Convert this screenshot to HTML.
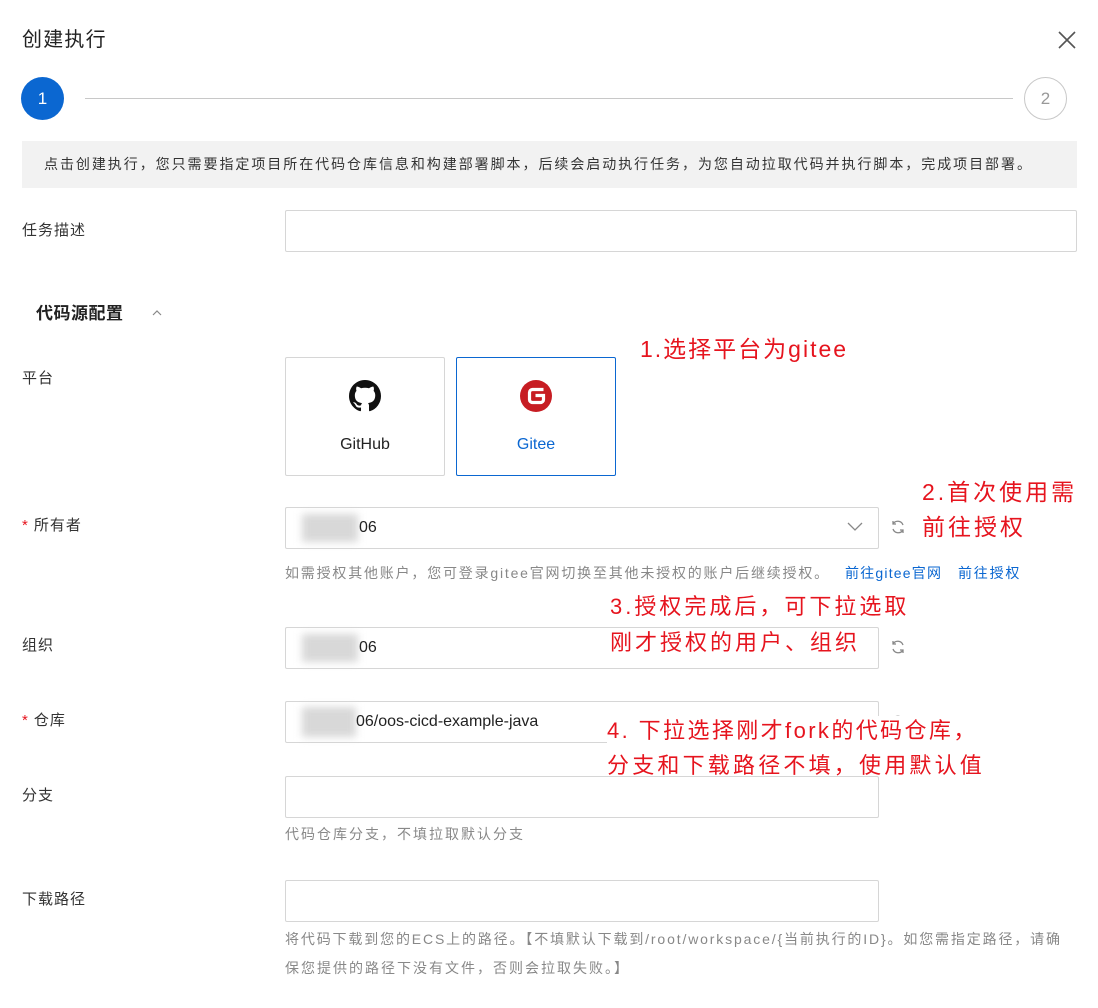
<!DOCTYPE html>
<html><head><meta charset="utf-8">
<style>
*{margin:0;padding:0;box-sizing:border-box}
body{width:1098px;height:1008px;background:#fff;position:relative;overflow:hidden;font-family:"Liberation Sans","Noto Sans CJK SC",sans-serif;color:#333;font-size:14px}
.a{position:absolute;white-space:nowrap}
.lbl{font-size:15px;color:#333;line-height:20px;letter-spacing:1px}
.inp{position:absolute;border:1px solid #d6d6d6;border-radius:2px;background:#fff}
.help{font-size:14px;color:#888;line-height:20px;letter-spacing:1.8px}
.red{color:#e6141e;font-size:22px;line-height:30px;background:#fff;letter-spacing:3px}
.blur{position:absolute;background:#d8d8d8;filter:blur(4px)}
.star{color:#e6141e;margin-right:5px}
</style></head><body>
<div class="a" style="left:22px;top:27px;font-size:20px;line-height:26px;color:#222;letter-spacing:1.2px">创建执行</div>
<svg class="a" style="left:1058px;top:31px" width="18" height="18" viewBox="0 0 18 18"><path d="M1 1L17 17M17 1L1 17" stroke="#555" stroke-width="1.6"/></svg>

<div class="a" style="left:21px;top:77px;width:43px;height:43px;border-radius:50%;background:#0b67d1;color:#fff;font-size:17px;line-height:43px;text-align:center">1</div>
<div class="a" style="left:85px;top:98px;width:928px;height:1px;background:#c8c8c8"></div>
<div class="a" style="left:1024px;top:77px;width:43px;height:43px;border-radius:50%;border:1px solid #c8c8c8;color:#999;font-size:17px;line-height:41px;text-align:center">2</div>

<div class="a" style="left:22px;top:141px;width:1055px;height:47px;background:#f2f2f2"></div>
<div class="a" style="left:44px;top:154px;font-size:14px;line-height:20px;color:#333;letter-spacing:1.95px">点击创建执行，您只需要指定项目所在代码仓库信息和构建部署脚本，后续会启动执行任务，为您自动拉取代码并执行脚本，完成项目部署。</div>

<div class="a lbl" style="left:22px;top:221px">任务描述</div>
<div class="inp" style="left:285px;top:210px;width:792px;height:42px"></div>

<div class="a" style="left:36px;top:303px;font-size:17px;font-weight:bold;line-height:22px;color:#222;letter-spacing:0.5px">代码源配置</div>
<svg class="a" style="left:152px;top:310px" width="10" height="6" viewBox="0 0 10 6"><path d="M1 5L5 1L9 5" stroke="#888" fill="none" stroke-width="1.2"/></svg>

<div class="a red" style="left:640px;top:334px;font-size:23px;letter-spacing:2px">1.选择平台为gitee</div>

<div class="a lbl" style="left:22px;top:369px">平台</div>
<div class="a" style="left:285px;top:357px;width:160px;height:119px;border:1px solid #d6d6d6;border-radius:2px"></div>
<svg class="a" style="left:349px;top:380px" width="32" height="32" viewBox="0 0 16 16"><path fill="#111" d="M8 0C3.58 0 0 3.58 0 8c0 3.54 2.290 6.53 5.47 7.59.4.07.55-.17.55-.38 0-.19-.01-.82-.01-1.49-2.01.37-2.53-.49-2.690-.94-.09-.23-.48-.94-.82-1.13-.28-.15-.68-.52-.01-.53.63-.01 1.08.58 1.23.82.72 1.21 1.87.87 2.33.66.07-.52.28-.87.51-1.07-1.78-.2-3.64-.89-3.64-3.95 0-.87.31-1.59.82-2.15-.08-.2-.36-1.02.08-2.12 0 0 .67-.21 2.2.82.64-.18 1.32-.27 2-.27.68 0 1.36.09 2 .27 1.53-1.04 2.2-.82 2.2-.82.44 1.1.16 1.92.08 2.12.51.56.82 1.27.82 2.15 0 3.07-1.87 3.75-3.65 3.95.29.25.54.73.54 1.48 0 1.07-.01 1.93-.01 2.2 0 .21.15.46.55.38A8.013 8.013 0 0016 8c0-4.42-3.58-8-8-8z"/></svg>
<div class="a" style="left:285px;top:435px;width:160px;text-align:center;font-size:16px;line-height:20px;color:#222">GitHub</div>

<div class="a" style="left:456px;top:357px;width:160px;height:119px;border:1px solid #0b67d1;border-radius:2px"></div>
<svg class="a" style="left:519px;top:379px" width="34" height="34" viewBox="0 0 34 34"><circle cx="17" cy="17" r="16" fill="#c71d23"/><path d="M24.5 10.5H13.5a3 3 0 0 0-3 3v7a3 3 0 0 0 3 3h8a3 3 0 0 0 3-3V16.5h-8" stroke="#fff" stroke-width="3.2" fill="none"/></svg>
<div class="a" style="left:456px;top:435px;width:160px;text-align:center;font-size:16px;line-height:20px;color:#0b67d1">Gitee</div>

<div class="a red" style="left:922px;top:477px;font-size:23px">2.首次使用需</div>
<div class="a red" style="left:922px;top:512px;font-size:23px">前往授权</div>

<div class="a lbl" style="left:22px;top:516px"><span class="star">*</span>所有者</div>
<div class="inp" style="left:285px;top:507px;width:594px;height:42px"></div>
<div class="blur" style="left:302px;top:514px;width:56px;height:28px"></div>
<div class="a" style="left:359px;top:517px;font-size:16px;line-height:22px;color:#222">06</div>
<svg class="a" style="left:847px;top:522px" width="16" height="10" viewBox="0 0 16 10"><path d="M1 1L8 8L15 1" stroke="#888" fill="none" stroke-width="1.3"/></svg>
<svg class="a" style="left:890px;top:519px" width="16" height="16" viewBox="0 0 16 16"><path d="M13 6A5.5 5.5 0 0 0 3 5M3 10a5.5 5.5 0 0 0 10 1M3 2v3h3M13 14v-3h-3" stroke="#888" fill="none" stroke-width="1.3"/></svg>
<div class="a help" style="left:285px;top:563px">如需授权其他账户，您可登录gitee官网切换至其他未授权的账户后继续授权。</div>
<div class="a" style="left:845px;top:563px;font-size:14px;line-height:20px;color:#0b67d1;letter-spacing:1.2px">前往gitee官网</div>
<div class="a" style="left:958px;top:563px;font-size:14px;line-height:20px;color:#0b67d1;letter-spacing:1.8px">前往授权</div>

<div class="a lbl" style="left:22px;top:636px">组织</div>
<div class="inp" style="left:285px;top:627px;width:594px;height:42px"></div>
<div class="blur" style="left:302px;top:634px;width:56px;height:28px"></div>
<div class="a" style="left:359px;top:637px;font-size:16px;line-height:22px;color:#222">06</div>
<svg class="a" style="left:890px;top:639px" width="16" height="16" viewBox="0 0 16 16"><path d="M13 6A5.5 5.5 0 0 0 3 5M3 10a5.5 5.5 0 0 0 10 1M3 2v3h3M13 14v-3h-3" stroke="#888" fill="none" stroke-width="1.3"/></svg>
<div class="a red" style="left:610px;top:592px;background:transparent">3.授权完成后，可下拉选取</div>
<div class="a red" style="left:610px;top:628px">刚才授权的用户、组织</div>

<div class="a lbl" style="left:22px;top:711px"><span class="star">*</span>仓库</div>
<div class="inp" style="left:285px;top:701px;width:594px;height:42px"></div>
<div class="blur" style="left:302px;top:707px;width:54px;height:30px"></div>
<div class="a" style="left:356px;top:711px;font-size:16px;line-height:22px;color:#222">06/oos-cicd-example-java</div>
<svg class="a" style="left:890px;top:714px" width="16" height="16" viewBox="0 0 16 16"><path d="M13 6A5.5 5.5 0 0 0 3 5M3 10a5.5 5.5 0 0 0 10 1" stroke="#888" fill="none" stroke-width="1.3"/></svg>
<div class="a red" style="left:607px;top:716px;letter-spacing:2.4px">4. 下拉选择刚才fork的代码仓库，</div>
<div class="a red" style="left:607px;top:751px;letter-spacing:3.2px">分支和下载路径不填，使用默认值</div>

<div class="a lbl" style="left:22px;top:786px">分支</div>
<div class="inp" style="left:285px;top:776px;width:594px;height:42px"></div>
<div class="a help" style="left:285px;top:824px;letter-spacing:2px">代码仓库分支，不填拉取默认分支</div>

<div class="a lbl" style="left:22px;top:890px">下载路径</div>
<div class="inp" style="left:285px;top:880px;width:594px;height:42px"></div>
<div class="a help" style="left:285px;top:929px;letter-spacing:1.85px">将代码下载到您的ECS上的路径。【不填默认下载到/root/workspace/{当前执行的ID}。如您需指定路径，请确</div>
<div class="a help" style="left:285px;top:958px;letter-spacing:2px">保您提供的路径下没有文件，否则会拉取失败。】</div>
</body></html>
